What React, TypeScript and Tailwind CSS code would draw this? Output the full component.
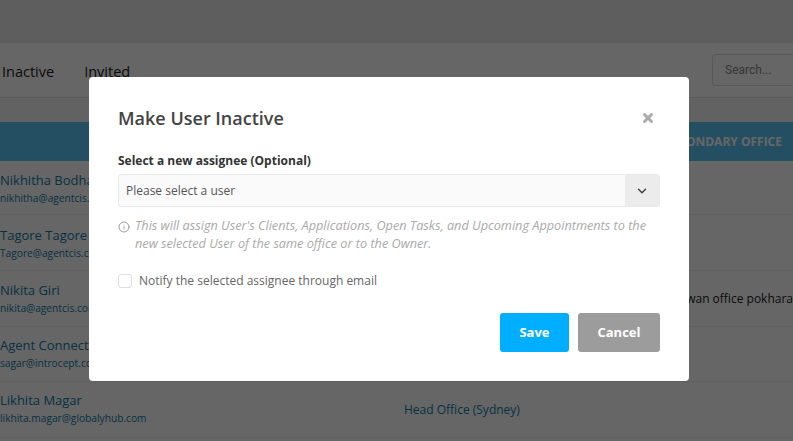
import React from 'react';
import { ChevronDown, Info, X } from 'lucide-react';

const users = [
  { name: 'Nikhitha Bodhankar', email: 'nikhitha@agentcis.com', office: '', secondary: '', row: 'h-[54px] pt-[10px]' },
  { name: 'Tagore Tagore', email: 'Tagore@agentcis.com', office: '', secondary: '', row: 'h-[56px] pt-[11px]' },
  { name: 'Nikita Giri', email: 'nikita@agentcis.com', office: '', secondary: 'Butwan office pokhara', row: 'h-[56px] pt-[10px]' },
  { name: 'Agent Connect', email: 'sagar@introcept.com', office: '', secondary: '', row: 'h-[55px] pt-[9px]' },
  { name: 'Likhita Magar', email: 'likhita.magar@globalyhub.com', office: 'Head Office (Sydney)', secondary: '', row: 'h-[56px] pt-[9px]' },
];

function UserRow({ user }: { user: (typeof users)[number] }) {
  return (
    <div className={`flex items-start border-b border-[#f0f0f0] bg-white ${user.row}`}>
      <div className="w-[404px] shrink-0">
        <p className="text-[13px] leading-[18px] text-[#0f7ba8]">{user.name}</p>
        <p className="mt-[2px] text-[10.2px] leading-[14px] text-[#0f7ba8]">{user.email}</p>
      </div>
      <div className="w-[250px] shrink-0 pt-[10px] text-xs leading-[18px] text-[#0f7ba8]">{user.office}</div>
      <div className="flex-1 pt-[9px] text-right text-xs leading-[18px] whitespace-nowrap text-[#222]">{user.secondary}</div>
    </div>
  );
}

export default function App() {
  return (
    <div className="relative h-[441px] w-[793px] overflow-hidden bg-white font-['Open_Sans',sans-serif]">
      <div className="h-[43px] bg-[#ececec]" />
      <div className="flex h-[55px] items-center justify-between border-b border-[#e4e4e4] bg-white pl-[2px]">
        <div className="flex translate-y-[2px] gap-[30px] text-[14.5px] text-[#222]">
          <span>Inactive</span>
          <span>Invited</span>
        </div>
        <div className="flex h-8 w-[120px] translate-x-[39px] items-center rounded border border-[#dddddd] pl-3 font-['Roboto',sans-serif] text-xs text-[#888]">
          Search...
        </div>
      </div>
      <div className="h-6 bg-[#f4f4f4]" />
      <div className="flex h-[39px] items-center justify-end bg-[#5ac5f5] pr-[11px] text-xs font-bold text-white">
        SECONDARY OFFICE
      </div>
      {users.map((user) => (
        <UserRow key={user.email} user={user} />
      ))}

      <div className="absolute inset-0 bg-black/60 pl-[89px] pt-[77px]">
        <div className="flex h-[304px] w-[600px] flex-col rounded bg-white px-[29px]">
          <div className="flex items-center justify-between pt-[27px]">
            <h2 className="text-lg leading-[28px] font-semibold text-[#444]">Make User Inactive</h2>
            <X className="mr-[5px] h-[14px] w-[14px] text-[#aaa]" strokeWidth={5} />
          </div>
          <label className="mt-[21px] text-xs leading-[16px] font-bold text-[#333]">Select a new assignee (Optional)</label>
          <div className="mt-[5px] flex h-[33px] items-stretch overflow-hidden rounded-[3px] border border-[#e8e8e8] bg-[#fafafa]">
            <span className="flex-1 self-center pl-[7px] text-xs text-[#555]">Please select a user</span>
            <span className="flex w-[34px] items-center justify-center bg-[#ececec]">
              <ChevronDown className="h-[14px] w-[14px] text-[#444]" strokeWidth={2.5} />
            </span>
          </div>
          <div className="mt-[9px] flex gap-[5px]">
            <Info className="mt-[5px] h-3 w-3 shrink-0 text-[#999]" />
            <p className="w-[520px] text-[12.7px] leading-[18px] text-[#aaa] italic">
              This will assign User's Clients, Applications, Open Tasks, and Upcoming Appointments to the new selected User of the same office or to the Owner.
            </p>
          </div>
          <div className="mt-[21px] flex items-center gap-[7px]">
            <span className="h-[14px] w-[14px] rounded-[3px] border border-[#ddd] bg-white" />
            <span className="text-xs text-[#666]">Notify the selected assignee through email</span>
          </div>
          <div className="mt-[24px] flex justify-end gap-[9px]">
            <button className="h-[39px] w-[69px] rounded-[3px] bg-[#00aeff] text-[13px] font-bold text-white">Save</button>
            <button className="h-[39px] w-[82px] rounded-[3px] bg-[#9c9c9c] text-[13px] font-bold text-white">Cancel</button>
          </div>
        </div>
      </div>
    </div>
  );
}
